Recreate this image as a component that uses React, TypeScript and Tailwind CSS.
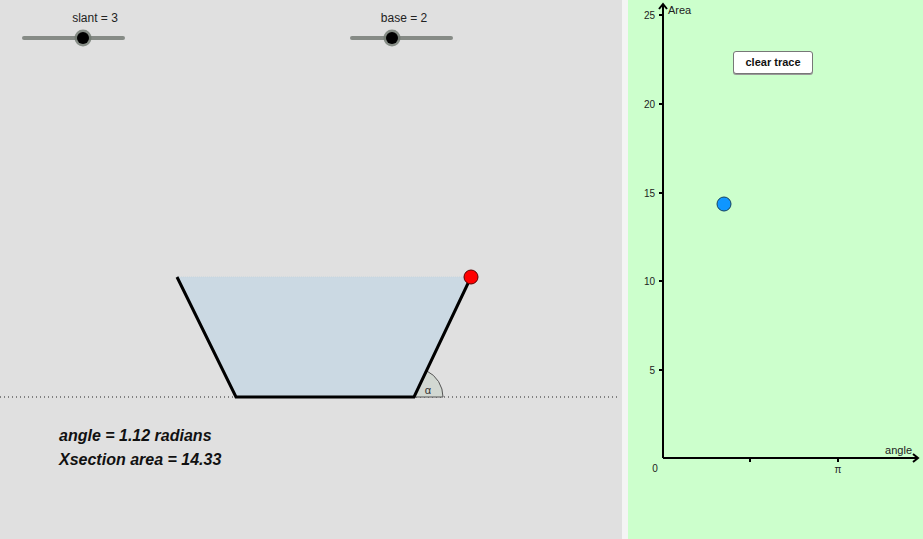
import React from 'react'

const font = '"Liberation Sans", Arial, sans-serif'

function Slider({ label, x, knob, labelX }: { label: string; x: number; knob: number; labelX: number }) {
  return (
    <g>
      <text x={labelX} y={22} textAnchor="middle" fontSize={12} fill="#222">
        {label}
      </text>
      <line x1={x + 2} y1={38} x2={x + 101} y2={38} stroke="#868b86" strokeWidth={4} strokeLinecap="round" />
      <circle cx={knob} cy={38} r={8.5} fill="#6f786f" opacity={0.8} />
      <circle cx={knob} cy={38} r={6} fill="#000" />
    </g>
  )
}

function CrossSection() {
  return (
    <svg width={622} height={539} className="block">
      <Slider label="slant = 3" x={22} knob={83} labelX={95} />
      <Slider label="base = 2" x={350} knob={392} labelX={404} />

      <line x1={0} y1={397} x2={620} y2={397} stroke="#222" strokeWidth={1} strokeDasharray="1 3" />

      <polygon points="177,277 471,277 414,397 236,397" fill="#cbd9e3" />
      <line x1={177} y1={277} x2={471} y2={277} stroke="#c7d6df" strokeWidth={1} strokeDasharray="1 1" />

      <path d="M414,397 L443,397 A29,29 0 0 0 426.7,370.9 Z" fill="#d2d8d2" stroke="#555" strokeWidth={1} />
      <text x={428} y={394} textAnchor="middle" fontSize={11} fill="#333">
        α
      </text>

      <polyline points="177,277 236,397 414,397 471,277" fill="none" stroke="#000" strokeWidth={3} />
      <circle cx={471} cy={277} r={7} fill="#ff0000" stroke="#5a0000" strokeWidth={1} />

      <text x={59} y={441} fontSize={16} fontWeight="bold" fontStyle="italic" fill="#111">
        angle = 1.12 radians
      </text>
      <text x={59} y={465} fontSize={16} fontWeight="bold" fontStyle="italic" fill="#111">
        Xsection area = 14.33
      </text>
    </svg>
  )
}

function Graph() {
  const yTicks = [
    { v: 25, y: 15 },
    { v: 20, y: 104 },
    { v: 15, y: 193 },
    { v: 10, y: 281 },
    { v: 5, y: 370 },
  ]
  return (
    <svg width={295} height={539} className="block">
      {/* axes, origin at (35, 458) in local coords (graph starts at x=628) */}
      <line x1={35} y1={458} x2={35} y2={5} stroke="#000" strokeWidth={2} />
      <polyline points="31,9 35,4 39,9" fill="none" stroke="#000" strokeWidth={2} />
      <line x1={35} y1={458} x2={289} y2={458} stroke="#000" strokeWidth={2} />
      <polyline points="285,454 290,458 285,462" fill="none" stroke="#000" strokeWidth={2} />

      {yTicks.map((t) => (
        <g key={t.v}>
          <line x1={31} y1={t.y} x2={35} y2={t.y} stroke="#000" strokeWidth={2} />
          <text x={27} y={t.y + 4} textAnchor="end" fontSize={10} fill="#222">
            {t.v}
          </text>
        </g>
      ))}

      <line x1={122} y1={458} x2={122} y2={462} stroke="#000" strokeWidth={2} />
      <line x1={210} y1={458} x2={210} y2={462} stroke="#000" strokeWidth={2} />
      <text x={210} y={473} textAnchor="middle" fontSize={10} fill="#222">
        π
      </text>
      <text x={27} y={472} textAnchor="middle" fontSize={10} fill="#222">
        0
      </text>

      <text x={40} y={14} fontSize={11} fill="#222">
        Area
      </text>
      <text x={284} y={454} textAnchor="end" fontSize={11} fill="#222">
        angle
      </text>

      <circle cx={96} cy={204} r={7} fill="#0f96ff" stroke="#16425f" strokeWidth={1} />
    </svg>
  )
}

export default function App() {
  return (
    <div className="flex h-[539px] w-[923px] overflow-hidden" style={{ fontFamily: font }}>
      <div className="h-full w-[622px] shrink-0 bg-[#e0e0e0]">
        <CrossSection />
      </div>
      <div className="h-full w-[6px] shrink-0 bg-[#f4f4f4]" />
      <div className="relative h-full w-[295px] shrink-0 bg-[#ccffcc]">
        <Graph />
        <button
          type="button"
          className="absolute left-[105px] top-[51px] h-[23px] w-[80px] rounded-[3px] border border-[#777] bg-white text-[11px] font-bold text-[#111] shadow-[0_1px_0_#999]"
        >
          clear trace
        </button>
      </div>
    </div>
  )
}
